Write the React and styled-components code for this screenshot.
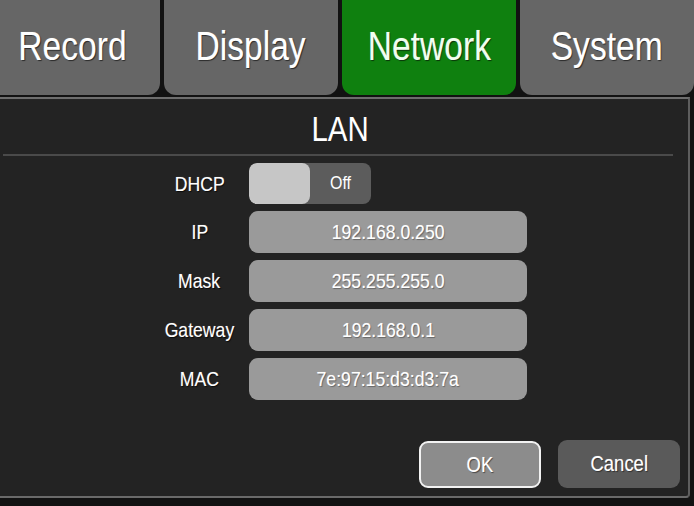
import React from 'react';
import styled, { createGlobalStyle } from 'styled-components';

const GlobalStyle = createGlobalStyle`
  html, body {
    margin: 0;
    padding: 0;
    background: #111;
  }
  body {
    font-family: "Liberation Sans", Arial, sans-serif;
    color: #fff;
  }
`;

const Screen = styled.div`
  width: 694px;
  height: 506px;
  background: #121212;
  overflow: hidden;
  display: flex;
  flex-direction: column;
`;

const TabBar = styled.div`
  display: flex;
  gap: 4px;
  height: 95px;
  flex: none;
`;

// the first tab runs off the left edge of the screen
const Tab = styled.div`
  width: ${props => props.width || 'auto'};
  flex: ${props => (props.width ? 'none' : '1')};
  margin-left: ${props => props.offset || 0}px;
  background: ${props => (props.active ? '#0f800f' : '#666')};
  border-radius: 0 0 12px 12px;
  display: flex;
  align-items: center;
  justify-content: center;
  font-size: 40px;
  padding-bottom: 2px;
  text-shadow: 1px 1px 1px rgba(0, 0, 0, 0.6), 0 0 1px rgba(255, 255, 255, 0.4);
  color: ${props => (props.active ? '#f0fff0' : '#fff')};
`;

const Narrow = styled.span`
  display: inline-block;
  transform: scaleX(${props => props.scale || 0.84});
  white-space: nowrap;
`;

const Panel = styled.div`
  margin-top: 2px;
  width: 688px;
  height: 397px;
  background: #232323;
  border-top: 2px solid #6e6e6e;
  border-right: 2px solid #5e5e5e;
  border-bottom: 2px solid #6a6a6a;
  border-bottom-right-radius: 4px;
  display: flex;
  flex-direction: column;
  flex: none;
`;

const Title = styled.div`
  height: 55px;
  display: flex;
  align-items: center;
  justify-content: center;
  font-size: 35px;
  padding: 4px 8px 0 0;
  box-sizing: border-box;
`;

const Divider = styled.div`
  height: 2px;
  background: #4a4a4a;
  margin: 0 15px 0 3px;
`;

const Form = styled.div`
  display: flex;
  flex-direction: column;
  gap: 7px;
  padding: 7px 0 0 150px;
`;

const Row = styled.div`
  display: flex;
  align-items: center;
  height: ${props => props.h || 42}px;
`;

const Label = styled.div`
  width: 99px;
  text-align: center;
  font-size: 21px;
  text-shadow: 1px 1px 1px rgba(0, 0, 0, 0.8), 0 0 1px rgba(255, 255, 255, 0.5);
`;

const Field = styled.div`
  width: 278px;
  height: 100%;
  background: #9a9a9a;
  border-radius: 9px;
  display: flex;
  align-items: center;
  justify-content: center;
  font-size: 21px;
  text-shadow: 1px 1px 1px rgba(0, 0, 0, 0.35), 0 0 1px rgba(255, 255, 255, 0.5);
`;

const Toggle = styled.div`
  width: 122px;
  height: 100%;
  background: #5c5c5c;
  border-radius: 8px;
  display: flex;
  align-items: center;
  overflow: hidden;
`;

const Knob = styled.div`
  width: 61px;
  height: 100%;
  background: #c6c6c6;
  border-radius: 8px;
`;

const ToggleText = styled.div`
  flex: 1;
  text-align: center;
  font-size: 19px;
  padding-bottom: 2px;
`;

const Actions = styled.div`
  display: flex;
  justify-content: flex-end;
  gap: 17px;
  padding: 41px 8px 0 0;
`;

const Button = styled.div`
  width: ${props => (props.primary ? 118 : 122)}px;
  height: ${props => (props.primary ? 43 : 48)}px;
  margin-top: ${props => (props.primary ? 0 : -1)}px;
  background: ${props => (props.primary ? '#8c8c8c' : '#5a5a5a')};
  border: ${props => (props.primary ? '2px solid #f2f2f2' : 'none')};
  border-radius: 9px;
  display: flex;
  align-items: center;
  justify-content: center;
  font-size: 22px;
  text-shadow: 1px 1px 1px rgba(0, 0, 0, 0.5), 0 0 1px rgba(255, 255, 255, 0.5);
`;

const fields = [
  { label: 'IP', value: '192.168.0.250' },
  { label: 'Mask', value: '255.255.255.0' },
  { label: 'Gateway', value: '192.168.0.1' },
  { label: 'MAC', value: '7e:97:15:d3:d3:7a' },
];

const App = () => (
  <Screen>
    <GlobalStyle />
    <TabBar>
      <Tab width="176px" offset={-16}><Narrow>Record</Narrow></Tab>
      <Tab width="174px"><Narrow>Display</Narrow></Tab>
      <Tab width="174px" active><Narrow>Network</Narrow></Tab>
      <Tab><Narrow>System</Narrow></Tab>
    </TabBar>
    <Panel>
      <Title><Narrow>LAN</Narrow></Title>
      <Divider />
      <Form>
        <Row h={41}>
          <Label><Narrow>DHCP</Narrow></Label>
          <Toggle>
            <Knob />
            <ToggleText><Narrow>Off</Narrow></ToggleText>
          </Toggle>
        </Row>
        {fields.map(f => (
          <Row key={f.label}>
            <Label><Narrow>{f.label}</Narrow></Label>
            <Field><Narrow>{f.value}</Narrow></Field>
          </Row>
        ))}
      </Form>
      <Actions>
        <Button primary><Narrow>OK</Narrow></Button>
        <Button><Narrow>Cancel</Narrow></Button>
      </Actions>
    </Panel>
  </Screen>
);

export default App;
